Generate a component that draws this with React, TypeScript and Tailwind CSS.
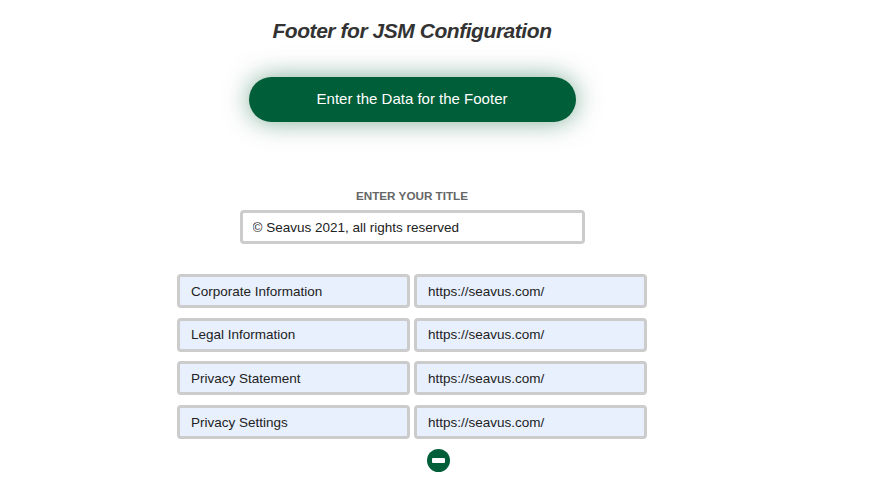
const links = [
    { label: 'Corporate Information', url: 'https://seavus.com/' },
    { label: 'Legal Information', url: 'https://seavus.com/' },
    { label: 'Privacy Statement', url: 'https://seavus.com/' },
    { label: 'Privacy Settings', url: 'https://seavus.com/' },
]

const fieldClass =
    'h-[34px] w-[233px] rounded-[4px] border-[3px] border-[#cccccc] bg-[#e8f0fe] px-[11px] text-[13.5px] text-[#222] outline-none'

export default function App() {
    return (
        <div className="min-h-[495px] w-full bg-white font-['Liberation_Sans',Arial,sans-serif]">
            <div className="flex w-[824px] flex-col items-center">
                <h1 className="mt-[17px] text-[21px] leading-[28px] font-bold tracking-[-0.45px] italic text-[#333]">
                    Footer for JSM Configuration
                </h1>
                <button
                    type="button"
                    className="mt-[32px] h-[45px] w-[327px] rounded-full bg-[#005e38] text-[15px] text-white shadow-[0_0_26px_rgba(0,94,56,0.5)]">
                    Enter the Data for the Footer
                </button>
                <label className="mt-[67px] text-[11.7px] leading-[14px] font-bold text-[#666] uppercase">
                    Enter your title
                </label>
                <input
                    type="text"
                    defaultValue="© Seavus 2021, all rights reserved"
                    className="mt-[7px] h-[34px] w-[345px] rounded-[4px] border-[3px] border-[#cccccc] bg-white px-[10px] text-[13.5px] text-[#222] outline-none"
                />
                <div className="mt-[30px] flex flex-col gap-[9.7px]">
                    {links.map((link, i) => (
                        <div key={i} className="flex gap-[4px]">
                            <input type="text" defaultValue={link.label} className={fieldClass} />
                            <input type="text" defaultValue={link.url} className={fieldClass} />
                        </div>
                    ))}
                </div>
            </div>
            <div className="mt-[10px] flex justify-center pl-[6px]">
                <button
                    type="button"
                    aria-label="Remove row"
                    className="flex h-[23px] w-[23px] items-center justify-center rounded-full bg-[#005e38]">
                    <span className="block h-[5px] w-[13px] rounded-[1px] bg-white" />
                </button>
            </div>
        </div>
    )
}
